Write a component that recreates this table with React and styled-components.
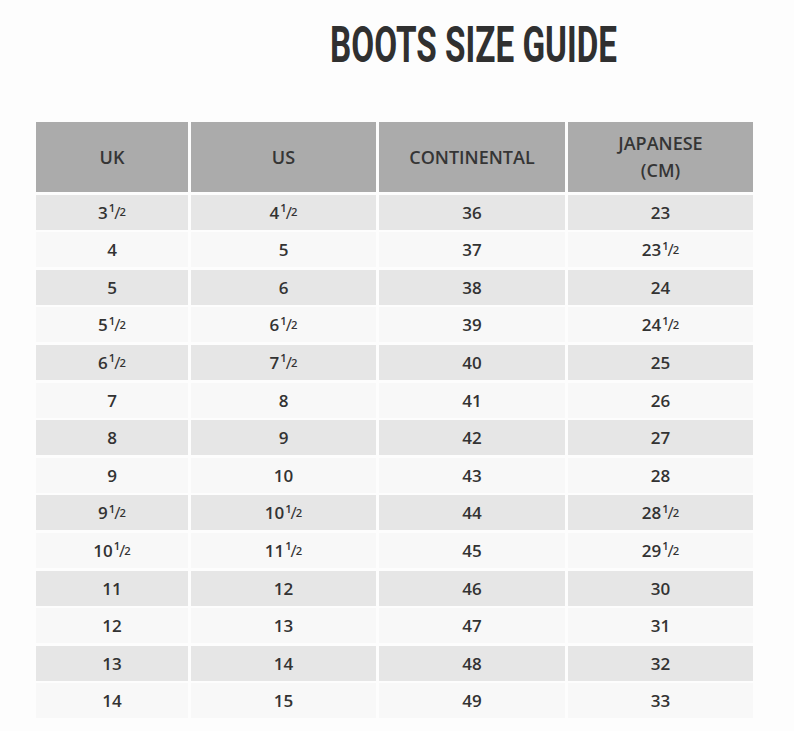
import React from 'react';
import styled, { createGlobalStyle } from 'styled-components';

const GlobalStyle = createGlobalStyle`
  body {
    margin: 0;
    background: #fdfdfd;
    font-family: "Open Sans", "Liberation Sans", sans-serif;
  }
`;

const rows = [
  ['3½', '4½', '36', '23'],
  ['4', '5', '37', '23½'],
  ['5', '6', '38', '24'],
  ['5½', '6½', '39', '24½'],
  ['6½', '7½', '40', '25'],
  ['7', '8', '41', '26'],
  ['8', '9', '42', '27'],
  ['9', '10', '43', '28'],
  ['9½', '10½', '44', '28½'],
  ['10½', '11½', '45', '29½'],
  ['11', '12', '46', '30'],
  ['12', '13', '47', '31'],
  ['13', '14', '48', '32'],
  ['14', '15', '49', '33'],
];

// turns "3½" into 3 with a small 1/2 after it
const Size = ({ value }) => {
  if (!value.endsWith('½')) return value;
  return (
    <>
      {value.slice(0, -1)}
      <Num>1</Num>
      <Slash>/</Slash>
      <Den>2</Den>
    </>
  );
};

const App = () => {
  return (
    <Page>
      <GlobalStyle />
      <TitleBar>
        <Title>BOOTS SIZE GUIDE</Title>
      </TitleBar>
      <Table>
        <HeadCell>UK</HeadCell>
        <HeadCell>US</HeadCell>
        <HeadCell>CONTINENTAL</HeadCell>
        <HeadCell>
          JAPANESE
          <br />
          (CM)
        </HeadCell>
        {rows.map((row, i) =>
          row.map((v, j) => (
            <Cell key={`${i}-${j}`} $shade={i % 2 === 0}>
              <Size value={v} />
            </Cell>
          ))
        )}
      </Table>
    </Page>
  );
};

export default App;

const Page = styled.div`
  width: 794px;
  height: 731px;
  padding-top: 20px;
  box-sizing: border-box;
`;

const TitleBar = styled.div`
  display: flex;
  padding-left: 330px;
  height: 50px;
  align-items: center;
`;

const Title = styled.h1`
  margin: 0;
  font-family: Roboto, "Liberation Sans", sans-serif;
  font-weight: 700;
  font-size: 50px;
  line-height: 50px;
  color: #303030;
  white-space: nowrap;
  transform: scaleX(0.665);
  transform-origin: left center;
`;

const Table = styled.div`
  margin: 52px 0 0 36px;
  display: grid;
  grid-template-columns: 152px 185px 186px 185px;
  grid-template-rows: 70px;
  grid-auto-rows: 35px;
  column-gap: 3px;
  row-gap: 2.6px;
`;

const HeadCell = styled.div`
  background: #ababab;
  color: #353535;
  font-size: 18px;
  font-weight: 600;
  line-height: 27px;
  display: flex;
  align-items: center;
  justify-content: center;
  text-align: center;
`;

const Cell = styled.div`
  background: ${(p) => (p.$shade ? '#e6e6e6' : '#f8f8f8')};
  color: #333;
  font-size: 17px;
  font-weight: 600;
  display: flex;
  align-items: center;
  justify-content: center;
  line-height: 1;
`;

const Num = styled.span`
  font-size: 0.66em;
  position: relative;
  top: -0.4em;
  margin-left: 1px;
`;

const Slash = styled.span`
  font-weight: 400;
  margin: 0 -1px;
`;

const Den = styled.span`
  font-size: 0.66em;
`;
